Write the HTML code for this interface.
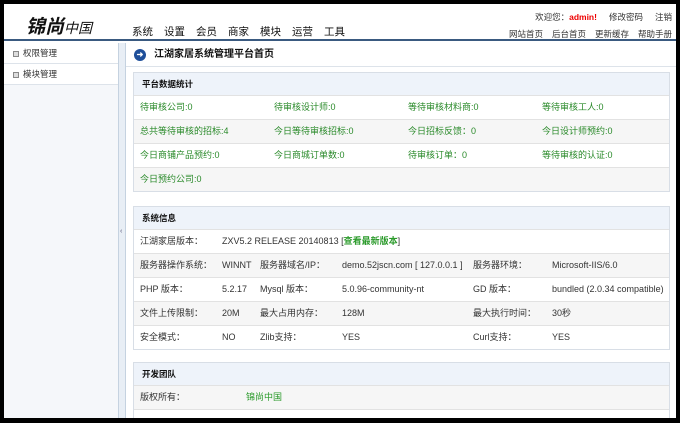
<!DOCTYPE html><html><head><meta charset="utf-8"><style>
*{margin:0;padding:0;box-sizing:border-box}
body{width:680px;height:423px;background:#000;font-family:"Liberation Sans","Noto Sans CJK SC",sans-serif;font-size:9px;color:#333;position:relative;overflow:hidden}
.page{position:absolute;left:4px;top:4px;width:672px;height:414px;background:#fff;overflow:hidden}
.hdr{position:absolute;left:0;top:0;width:672px;height:37px;background:#fff;border-bottom:2px solid #3a5a80}
.logo{position:absolute;left:22px;top:8px;font-size:19px;font-style:italic;font-weight:bold;color:#111;font-family:"Noto Sans CJK SC",sans-serif}
.logo small{font-size:14px;font-weight:normal}
.nav{position:absolute;left:128px;top:20px;font-size:10.5px;color:#111}
.nav span{margin-right:11px}
.r1{position:absolute;right:4px;top:7px;font-size:8.5px;color:#333}
.r1 b{color:#e00}
.r1 span{margin-left:12px}
.r2{position:absolute;right:4px;top:24px;font-size:8.5px;color:#333}
.r2 span{margin-left:9px}
.side{position:absolute;left:0;top:39px;width:114px;height:380px;background:#f5f7fa}
.side div{height:21px;border-bottom:1px solid #dde3ea;padding-left:9px;line-height:20px;font-size:8.5px;background:#fff}
.side i{display:inline-block;width:6px;height:6px;border:1px solid #888;background:#ddd;margin-right:4px;vertical-align:-1px}
.split{position:absolute;left:114px;top:39px;width:8px;height:380px;background:#e8eef5;border-left:1px solid #c5d2e0;border-right:1px solid #c5d2e0}
.split span{position:absolute;left:1px;top:185px;font-size:7px;color:#557}
.tb{position:absolute;left:122px;top:39px;width:550px;height:24px;border-bottom:1px solid #dde3ea;font-weight:bold;font-size:10px;line-height:24px;padding-left:28px;color:#111}
.tb i{position:absolute;left:8px;top:6px;width:12px;height:12px;border-radius:50%;background:#1f4f9a;color:#fff;font-size:8px;line-height:12px;text-align:center;font-style:normal}
.box{position:absolute;left:129px;width:537px;border:1px solid #d8dee6}
.bh{height:22px;background:#eef3fa;font-weight:bold;line-height:22px;padding-left:8px;color:#111;font-size:8.5px}
.row{height:24px;border-top:1px solid #e2e2e2;line-height:23px;position:relative}
.row:nth-child(odd){background:#f6f6f6}
.row span{position:absolute}
.g{color:#2a8a2a}
.green{color:#2a9a2a}
</style></head><body><div class="page">
<div class="hdr"><div class="logo">锦尚<small>中国</small></div>
<div class="nav"><span>系统</span><span>设置</span><span>会员</span><span>商家</span><span>模块</span><span>运营</span><span>工具</span></div>
<div class="r1">欢迎您：<b>admin!</b><span>修改密码</span><span>注销</span></div>
<div class="r2"><span>网站首页</span><span>后台首页</span><span>更新缓存</span><span>帮助手册</span></div></div>
<div class="side"><div><i></i>权限管理</div><div><i></i>模块管理</div></div>
<div class="split"><span>‹</span></div>
<div class="tb"><i>➜</i>江湖家居系统管理平台首页</div>
<div class="box g" style="top:68px">
<div class="bh">平台数据统计</div>
<div class="row"><span style="left:6px">待审核公司:0</span><span style="left:140px">待审核设计师:0</span><span style="left:274px">等待审核材料商:0</span><span style="left:408px">等待审核工人:0</span></div>
<div class="row"><span style="left:6px">总共等待审核的招标:4</span><span style="left:140px">今日等待审核招标:0</span><span style="left:274px">今日招标反馈：0</span><span style="left:408px">今日设计师预约:0</span></div>
<div class="row"><span style="left:6px">今日商铺产品预约:0</span><span style="left:140px">今日商城订单数:0</span><span style="left:274px">待审核订单：0</span><span style="left:408px">等待审核的认证:0</span></div>
<div class="row"><span style="left:6px">今日预约公司:0</span></div></div>
<div class="box" style="top:202px">
<div class="bh">系统信息</div>
<div class="row"><span style="left:6px">江湖家居版本：</span><span style="left:88px">ZXV5.2 RELEASE 20140813 [<b class="green">查看最新版本</b>]</span></div>
<div class="row"><span style="left:6px">服务器操作系统：</span><span style="left:88px">WINNT</span><span style="left:126px">服务器域名/IP：</span><span style="left:208px">demo.52jscn.com [ 127.0.0.1 ]</span><span style="left:339px">服务器环境：</span><span style="left:418px">Microsoft-IIS/6.0</span></div>
<div class="row"><span style="left:6px">PHP 版本：</span><span style="left:88px">5.2.17</span><span style="left:126px">Mysql 版本：</span><span style="left:208px">5.0.96-community-nt</span><span style="left:339px">GD 版本：</span><span style="left:418px">bundled (2.0.34 compatible)</span></div>
<div class="row"><span style="left:6px">文件上传限制：</span><span style="left:88px">20M</span><span style="left:126px">最大占用内存：</span><span style="left:208px">128M</span><span style="left:339px">最大执行时间：</span><span style="left:418px">30秒</span></div>
<div class="row"><span style="left:6px">安全模式：</span><span style="left:88px">NO</span><span style="left:126px">Zlib支持：</span><span style="left:208px">YES</span><span style="left:339px">Curl支持：</span><span style="left:418px">YES</span></div></div>
<div class="box" style="top:358px">
<div class="bh">开发团队</div>
<div class="row" style="background:#f6f6f6"><span style="left:6px">版权所有：</span><span class="green" style="left:112px">锦尚中国</span></div>
<div class="row" style="background:#fff"></div></div>
</div></body></html>
